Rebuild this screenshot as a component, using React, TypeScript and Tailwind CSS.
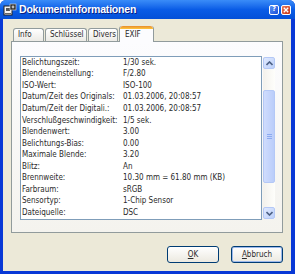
import React from "react";

const rows: [string, string][] = [
  ["Belichtungszeit:", "1/30 sek."],
  ["Blendeneinstellung:", "F/2.80"],
  ["ISO-Wert:", "ISO-100"],
  ["Datum/Zeit des Originals:", "01.03.2006, 20:08:57"],
  ["Datum/Zeit der Digitali.:", "01.03.2006, 20:08:57"],
  ["Verschlußgeschwindigkeit:", "1/5 sek."],
  ["Blendenwert:", "3.00"],
  ["Belichtungs-Bias:", "0.00"],
  ["Maximale Blende:", "3.20"],
  ["Blitz:", "An"],
  ["Brennweite:", "10.30 mm = 61.80 mm (KB)"],
  ["Farbraum:", "sRGB"],
  ["Sensortyp:", "1-Chip Sensor"],
  ["Dateiquelle:", "DSC"],
];

const Tab = ({ label, width, active }: { label: string; width: string; active?: boolean }) =>
  active ? (
    <div
      className={`${width} h-[16px] -mb-px relative z-10 bg-[#fcfcfe] border-x border-[#919b9c] rounded-t-[3px] flex flex-col`}
    >
      <div className="h-[3px] rounded-t-[3px] bg-gradient-to-b from-[#e68b2c] to-[#ffc73c]" />
      <div className="flex-1 pl-[5px] pt-[1px] leading-[10px]">{label}</div>
    </div>
  ) : (
    <div
      className={`${width} h-[13px] border border-b-0 border-[#919b9c] rounded-t-[3px] bg-gradient-to-b from-[#ffffff] to-[#ecebe6] pl-[4px] pt-[1px] leading-[10px]`}
    >
      {label}
    </div>
  );

const Arrow = ({ up }: { up?: boolean }) => (
  <svg width="7" height="5" viewBox="0 0 7 5">
    <path
      d={up ? "M0.5 4 L3.5 1 L6.5 4" : "M0.5 1 L3.5 4 L6.5 1"}
      fill="none"
      stroke="#4d6185"
      strokeWidth="1.6"
    />
  </svg>
);

export default function App() {
  return (
    <div
      className="w-[295px] h-[274px] bg-[#0838d6] flex flex-col rounded-t-[6px] overflow-hidden text-[#2a2a2a]"
      style={{ fontFamily: "'DejaVu Sans Condensed', 'DejaVu Sans', sans-serif" }}
    >
      {/* title bar */}
      <div className="h-[19px] flex items-center pl-[3px] pr-[4px] bg-gradient-to-b from-[#3a8cf8] via-[#0a5ce6] to-[#0450d8]">
        <svg width="14" height="14" viewBox="0 0 14 14" className="mr-[2px]">
          <rect x="1" y="3" width="8" height="9" fill="#f4f4f4" stroke="#222" />
          <rect x="3" y="5" width="4" height="3" fill="#555" />
          <rect x="7" y="1" width="6" height="6" fill="#333" stroke="#ddd" strokeWidth="0.6" />
          <circle cx="10" cy="4" r="1.4" fill="#bbb" />
          <rect x="2" y="10" width="6" height="1" fill="#666" />
        </svg>
        <span
          className="text-white font-bold text-[10.5px] tracking-[-0.2px] [text-shadow:1px_1px_0_#0a1e80]"
          style={{ fontFamily: "'Liberation Sans', Arial, sans-serif" }}
        >
          Dokumentinformationen
        </span>
        <div className="flex-1" />
        <div className="w-[10px] h-[10px] rounded-[2px] border border-white bg-gradient-to-br from-[#5a8ff5] to-[#1a4fd8] flex items-center justify-center text-white font-bold text-[7px] leading-none">
          ?
        </div>
        <div className="ml-[2px] w-[10px] h-[10px] rounded-[2px] border border-white bg-gradient-to-br from-[#e8795a] to-[#c8300c] flex items-center justify-center">
          <svg width="6" height="6" viewBox="0 0 6 6">
            <path d="M0.8 0.8 L5.2 5.2 M5.2 0.8 L0.8 5.2" stroke="#fff" strokeWidth="1.3" />
          </svg>
        </div>
      </div>

      {/* body */}
      <div className="flex-1 ml-[3px] mr-[4px] mb-[3px] bg-[#ece9d8] flex flex-col pt-[7px] px-[8px] text-[8px]">
        <div className="h-[15px] flex items-end pl-[2px] gap-[1px]">
          <Tab label="Info" width="w-[31px]" />
          <Tab label="Schlüssel" width="w-[42px]" />
          <Tab label="Divers" width="w-[30px]" />
          <Tab label="EXIF" width="w-[35px]" active />
        </div>

        <div className="h-[192px] border border-[#919b9c] bg-gradient-to-b from-[#fcfcfe] to-[#f4f3ee] pl-[8px] pt-[14px] flex items-start">
          <div className="w-[242px] h-[164px] border border-[#7f9db9] bg-white overflow-hidden pl-[1px]">
            {rows.map(([k, v]) => (
              <div key={k} className="h-[11.55px] flex items-center whitespace-nowrap">
                <span className="w-[101px] shrink-0">{k}</span>
                <span>{v}</span>
              </div>
            ))}
          </div>

          {/* scrollbar */}
          <div className="ml-[1px] mt-[1px] w-[12px] h-[162px] flex flex-col bg-gradient-to-r from-[#f3f1ec] to-[#fefefb]">
            <div className="h-[12px] rounded-[2px] border border-[#b4c8f6] bg-gradient-to-br from-[#e0e9fe] to-[#bcd0fa] flex items-center justify-center">
              <Arrow up />
            </div>
            <div className="flex-1 pt-[21px]">
              <div className="h-[93px] rounded-[2px] border border-[#b4c8f6] bg-gradient-to-r from-[#cfdcfd] to-[#bacdfa] flex flex-col items-center justify-center gap-[1px]">
                <div className="w-[5px] h-px bg-[#8caaf0]" />
                <div className="w-[5px] h-px bg-[#8caaf0]" />
                <div className="w-[5px] h-px bg-[#8caaf0]" />
              </div>
            </div>
            <div className="h-[12px] mt-[21px] rounded-[2px] border border-[#b4c8f6] bg-gradient-to-br from-[#e0e9fe] to-[#bcd0fa] flex items-center justify-center">
              <Arrow />
            </div>
          </div>
        </div>

        <div className="mt-[13px] flex justify-end gap-[12px]">
          <button className="w-[52px] h-[17px] rounded-[3px] border border-[#003c74] bg-gradient-to-b from-[#ffffff] to-[#ece9e0] leading-none">
            <span className="underline">O</span>K
          </button>
          <button className="w-[52px] h-[17px] rounded-[3px] border border-[#003c74] bg-gradient-to-b from-[#ffffff] to-[#ece9e0] leading-none shadow-[inset_0_0_0_1px_#9db9eb]">
            <span className="underline">A</span>bbruch
          </button>
        </div>
      </div>
    </div>
  );
}
